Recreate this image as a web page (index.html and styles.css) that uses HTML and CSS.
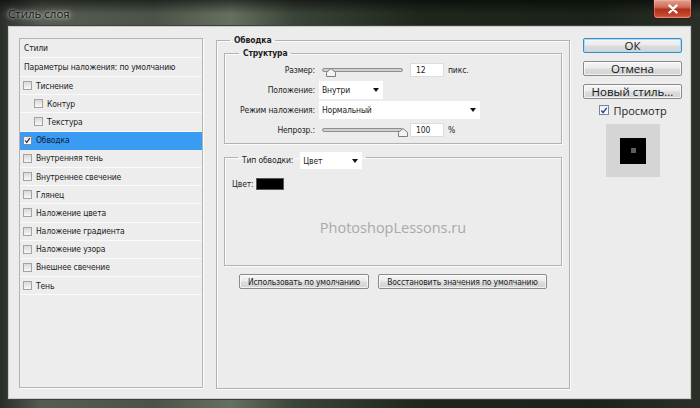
FILE: index.html
```html
<!DOCTYPE html>
<html lang="ru">
<head>
<meta charset="utf-8">
<title>Стиль слоя</title>
<link rel="stylesheet" href="styles.css">
</head>
<body>
<div class="window">
  <header class="titlebar">
    <span class="title">Стиль слоя</span>
    <button class="close" aria-label="Закрыть"><svg width="12" height="10" viewBox="0 0 12 10"><path d="M2.5 1.5 L9.5 8.5 M9.5 1.5 L2.5 8.5" stroke="#fff" stroke-width="2.4" stroke-linecap="round"/></svg></button>
  </header>
  <main class="client">
    <ul class="styles-list">
      <li class="row header">Стили</li>
      <li class="row header">Параметры наложения: по умолчанию</li>
      <li class="row"><span class="cb"></span>Тиснение</li>
      <li class="row sub"><span class="cb"></span>Контур</li>
      <li class="row sub"><span class="cb"></span>Текстура</li>
      <li class="row selected"><span class="cb checked"><svg width="9" height="9" viewBox="0 0 9 9"><path d="M1.5 4.5 L3.5 7 L7.5 1.5" fill="none" stroke="#1d2a5c" stroke-width="1.5"/></svg></span>Обводка</li>
      <li class="row"><span class="cb"></span>Внутренняя тень</li>
      <li class="row"><span class="cb"></span>Внутреннее свечение</li>
      <li class="row"><span class="cb"></span>Глянец</li>
      <li class="row"><span class="cb"></span>Наложение цвета</li>
      <li class="row"><span class="cb"></span>Наложение градиента</li>
      <li class="row"><span class="cb"></span>Наложение узора</li>
      <li class="row"><span class="cb"></span>Внешнее свечение</li>
      <li class="row"><span class="cb"></span>Тень</li>
    </ul>

    <fieldset class="group main-group">
      <legend class="legend-main">Обводка</legend>
      <fieldset class="group sub-group structure">
        <legend class="legend-sub">Структура</legend>
        <div class="form-grid">
          <span class="lbl">Размер:</span>
          <div class="ctrl">
            <svg class="slider" width="86" height="10" viewBox="0 0 86 10"><rect x="0.5" y="1.5" width="80" height="3" rx="1.5" fill="#cfcfcf" stroke="#8e8e8e"/><path d="M4.5 9.5 V5.5 L9 1.5 L13.5 5.5 V9.5 Z" fill="#f4f4f4" stroke="#7d7d7d"/></svg>
            <span class="num">12</span>
            <span class="unit">пикс.</span>
          </div>
          <span class="lbl">Положение:</span>
          <div class="ctrl"><span class="select select-pos">Внутри<i class="arrow"></i></span></div>
          <span class="lbl">Режим наложения:</span>
          <div class="ctrl"><span class="select select-mode">Нормальный<i class="arrow"></i></span></div>
          <span class="lbl">Непрозр.:</span>
          <div class="ctrl">
            <svg class="slider" width="86" height="10" viewBox="0 0 86 10"><rect x="0.5" y="1.5" width="80" height="3" rx="1.5" fill="#cfcfcf" stroke="#8e8e8e"/><path d="M76.5 9.5 V5.5 L81 1.5 L85.5 5.5 V9.5 Z" fill="#f4f4f4" stroke="#7d7d7d"/></svg>
            <span class="num">100</span>
            <span class="unit">%</span>
          </div>
        </div>
      </fieldset>

      <fieldset class="group sub-group fill-type">
        <legend class="legend-select"><span class="legend-label">Тип обводки:</span><span class="select select-type">Цвет<i class="arrow"></i></span></legend>
        <div class="color-row"><span>Цвет:</span><span class="swatch"></span></div>
        <div class="watermark">PhotoshopLessons.ru</div>
      </fieldset>

      <div class="defaults">
        <button class="btn btn-small btn-use">Использовать по умолчанию</button>
        <button class="btn btn-small btn-reset">Восстановить значения по умолчанию</button>
      </div>
    </fieldset>

    <aside class="actions">
      <button class="btn btn-big btn-default">ОК</button>
      <button class="btn btn-big">Отмена</button>
      <button class="btn btn-big">Новый стиль...</button>
      <div class="preview-toggle"><span class="cb cb-blue"><svg width="9" height="9" viewBox="0 0 9 9"><path d="M1.5 4.5 L3.5 7 L7.5 1.5" fill="none" stroke="#1d3b8c" stroke-width="1.5"/></svg></span>Просмотр</div>
      <div class="preview"><div class="preview-swatch"><span class="preview-dot"></span></div></div>
    </aside>
  </main>
</div>
</body>
</html>
```
FILE: styles.css
```css
* { box-sizing: border-box; }

body {
  margin: 0;
  width: 700px;
  height: 408px;
  overflow: hidden;
  background: #0e100e;
  font-family: "DejaVu Sans Condensed", "Liberation Sans", Arial, sans-serif;
  font-size: 8.5px;
  letter-spacing: -0.15px;
  color: #1c1c1c;
}

.window {
  height: 408px;
  display: flex;
  flex-direction: column;
  background:
    linear-gradient(180deg, rgba(0,0,0,0.55) 0, rgba(0,0,0,0) 14px),
    linear-gradient(90deg, #2a2e29 0, #555c52 6%, #4b5248 22%, #667060 33%, #3b4438 42%, #1f271d 60%, #1b2219 85%, #2a3027 100%);
}

.titlebar {
  height: 27px;
  flex: none;
  display: flex;
  align-items: flex-start;
}

.title {
  padding-left: 8px;
  line-height: 27px;
  font-family: "Open Sans", "Liberation Sans", sans-serif;
  font-size: 11.5px;
  letter-spacing: 0;
  color: #141414;
  text-shadow: 0 0 6px rgba(230,235,228,0.9), 0 0 3px rgba(230,235,228,0.9);
}

.close {
  margin-left: auto;
  margin-right: 8px;
  width: 39px;
  height: 19px;
  padding: 0;
  border: 1px solid #3b1712;
  border-top: 0;
  border-radius: 0 0 4px 4px;
  background: linear-gradient(180deg, #e3a294 0, #cf6a55 40%, #b0301c 52%, #c5452e 85%, #d8705a 100%);
  display: flex;
  align-items: center;
  justify-content: center;
  box-shadow: inset 0 0 0 1px rgba(255,200,190,0.35);
}

.client {
  flex: 1;
  margin: 0 10px 10px 9px;
  background: #ececec;
  box-shadow: 0 0 0 1px #c9ccc8, 0 0 0 2px #3b4239;
  padding: 11px 7px 0 10px;
  display: grid;
  grid-template-columns: 184px 354px 100px;
  column-gap: 13px;
  align-items: start;
}

/* Left styles list */
.styles-list {
  list-style: none;
  margin: 0;
  padding: 0;
  height: 350px;
  border: 1px solid #b3b3b3;
  box-shadow: 1px 1px 0 #fcfcfc;
  background: #ededed;
}

.row {
  height: 18.2px;
  border-bottom: 1px solid #fafafa;
  display: flex;
  align-items: center;
  gap: 4px;
  padding-left: 3px;
  white-space: nowrap;
}

.row.header {
  height: 19px;
  padding-left: 4px;
}

.row.sub { padding-left: 14px; }

.row.selected { background: #3a9bf2; border-bottom-color: #3a9bf2; color: #111c3a; }

.cb {
  width: 9px;
  height: 9px;
  flex: none;
  border: 1px solid #a3a3a3;
  background: linear-gradient(180deg, #d9d9d9, #f7f7f7);
  display: inline-flex;
  align-items: center;
  justify-content: center;
}

.cb svg { display: block; }

.cb.checked { background: linear-gradient(180deg, #e6e6e6, #ffffff); border-color: #7c8ba3; }

/* Fieldsets */
.group {
  margin: 0;
  min-width: 0;
  border: 1px solid #b2b2b2;
  box-shadow: inset 1px 1px 0 #fbfbfb, 1px 1px 0 #fbfbfb;
}

.group legend {
  font-weight: bold;
  line-height: 12px;
  padding: 0 4px;
}

.main-group {
  margin-top: -4px;
  height: 355px;
  padding: 1px 7px 0 7px;
}

.legend-main { margin-left: 6px; }

.sub-group { padding: 0; }

.structure {
  height: 97px;
  padding: 1px 0 2px 0;
}

.legend-sub { margin-left: 14px; }

.form-grid {
  display: grid;
  grid-template-columns: 90px 1fr;
  grid-auto-rows: 20px;
  column-gap: 4px;
  align-items: center;
}

.lbl { text-align: right; white-space: nowrap; }

.ctrl {
  display: flex;
  align-items: center;
}

.slider { margin-left: 3px; margin-top: 3px; display: block; }

.num {
  margin-left: 2px;
  width: 34px;
  height: 14px;
  line-height: 12px;
  padding-left: 5px;
  background: #fff;
  border: 1px solid #d5dde6;
}

.unit { margin-left: 4px; }

.select {
  height: 18px;
  background: #fff;
  display: inline-flex;
  align-items: center;
  justify-content: space-between;
  padding: 0 4px 0 3px;
}

.select-pos { width: 64px; }
.select-mode { width: 161px; }
.select-type { width: 62px; height: 17px; font-weight: normal; }

.arrow {
  width: 0;
  height: 0;
  border-left: 3.5px solid transparent;
  border-right: 3.5px solid transparent;
  border-top: 4px solid #111;
}

.fill-type {
  margin-top: 8px;
  height: 114px;
  padding: 16px 0 0 7px;
}

.legend-select {
  margin-left: 6px;
  height: 10px;
  display: flex;
  align-items: flex-start;
  gap: 7px;
}

.legend-select .legend-label { line-height: 16px; font-weight: normal; }

.color-row {
  display: flex;
  align-items: center;
  gap: 3px;
  height: 12px;
}

.swatch {
  width: 28px;
  height: 12px;
  background: #000;
  border: 1px solid #555;
}

.watermark {
  margin-top: 28px;
  margin-right: 7px;
  text-align: center;
  line-height: 20px;
  font-family: "Open Sans", "Liberation Sans", sans-serif;
  font-size: 14.5px;
  letter-spacing: 0;
  color: #a9a9a9;
}

.defaults {
  margin-top: 8px;
  display: flex;
  justify-content: center;
  gap: 9px;
}

/* Buttons */
.btn {
  margin: 0;
  padding: 0;
  border: 1px solid #8a8a8a;
  border-radius: 2px;
  background: linear-gradient(180deg, #f6f6f6 0, #ebebeb 45%, #dcdcdc 55%, #d3d3d3 100%);
  color: #1d1d1d;
  font-family: "DejaVu Sans Condensed", "Liberation Sans", Arial, sans-serif;
  font-size: 8.5px;
  letter-spacing: -0.15px;
  white-space: nowrap;
  box-shadow: inset 0 0 0 1px rgba(255,255,255,0.7);
}

.btn-small { height: 15px; line-height: 12px; }
.btn-use { width: 130px; }
.btn-reset { width: 169px; }

.actions {
  display: flex;
  flex-direction: column;
  align-items: center;
  width: 100px;
}

.btn-big {
  width: 99px;
  height: 15px;
  margin-bottom: 8px;
  font-family: "Open Sans", "Liberation Sans", sans-serif;
  font-size: 11.5px;
  letter-spacing: 0;
  line-height: 12px;
  color: #151515;
  align-self: flex-start;
}

.btn-default {
  border-color: #3c8dbf;
  box-shadow: inset 0 0 0 1px #a9def5;
}

.preview-toggle {
  margin-top: -3px;
  height: 12px;
  display: flex;
  align-items: center;
  gap: 4px;
  font-family: "Open Sans", "Liberation Sans", sans-serif;
  font-size: 11px;
  letter-spacing: 0;
  color: #1d1d1d;
}

.cb-blue { width: 10px; height: 10px; border-color: #6f86a8; background: linear-gradient(180deg, #e9eef6, #ffffff); }

.preview {
  margin-top: 8px;
  width: 54px;
  height: 53px;
  background: #d5d5d5;
  display: flex;
  align-items: center;
  justify-content: center;
}

.preview-swatch {
  width: 26px;
  height: 26px;
  background: #000;
  display: flex;
  align-items: center;
  justify-content: center;
}

.preview-dot {
  width: 5px;
  height: 5px;
  background: #5e5e5e;
}
```
